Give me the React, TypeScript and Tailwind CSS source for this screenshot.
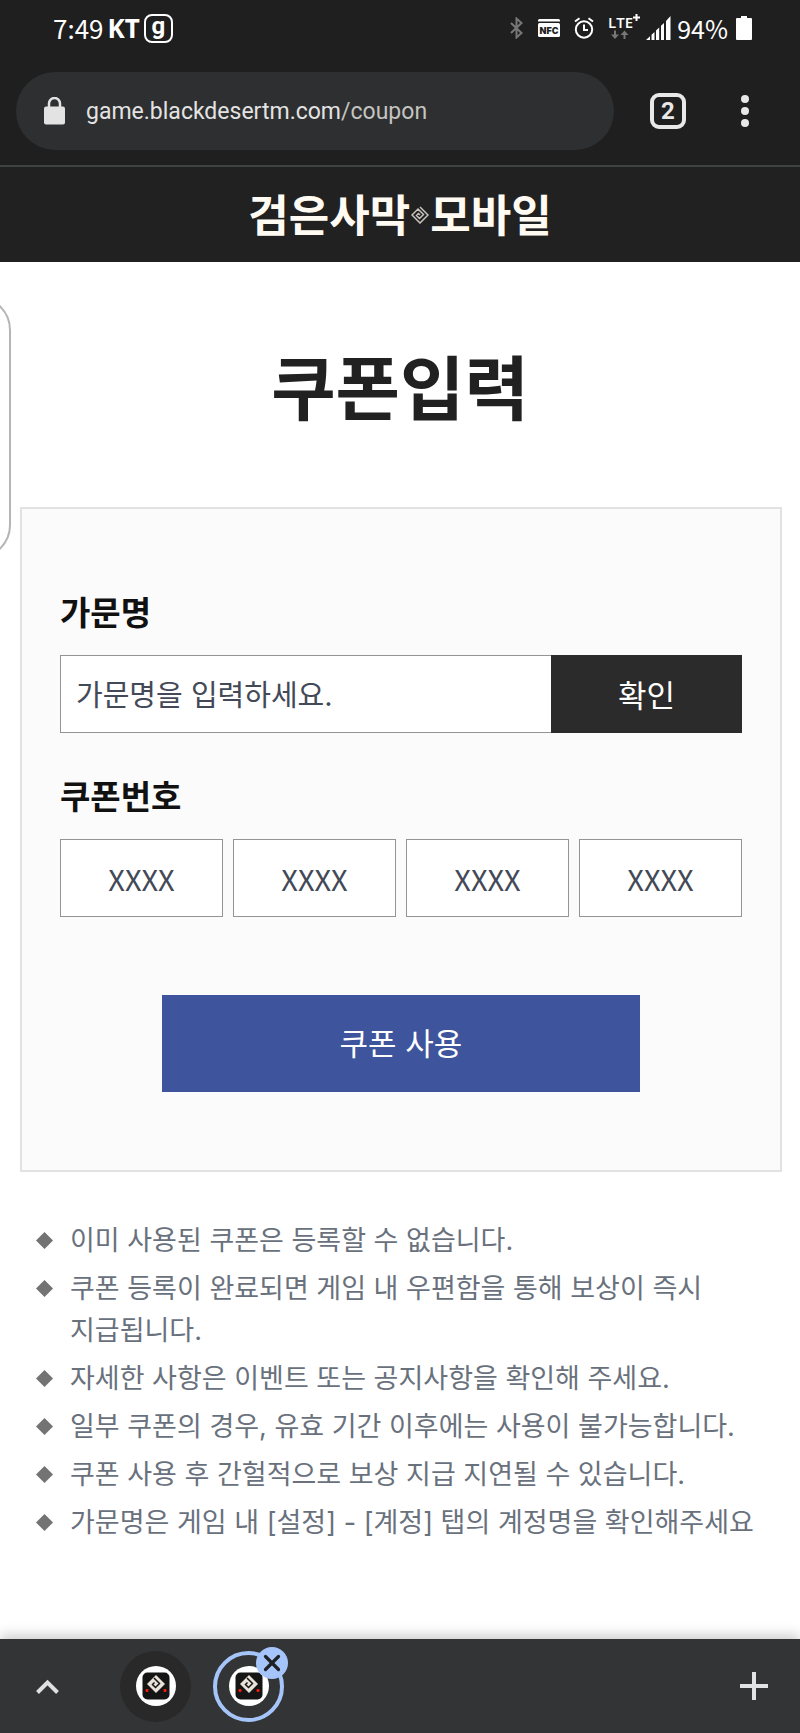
import { X } from "lucide-react";

const CODE_FIELDS = [1, 2, 3, 4];

const NOTICES = [
  "이미 사용된 쿠폰은 등록할 수 없습니다.",
  "쿠폰 등록이 완료되면 게임 내 우편함을 통해 보상이 즉시 지급됩니다.",
  "자세한 사항은 이벤트 또는 공지사항을 확인해 주세요.",
  "일부 쿠폰의 경우, 유효 기간 이후에는 사용이 불가능합니다.",
  "쿠폰 사용 후 간헐적으로 보상 지급 지연될 수 있습니다.",
  "가문명은 게임 내 [설정] - [계정] 탭의 계정명을 확인해주세요",
];

function StatusBar() {
  return (
    <div className="flex h-14 items-center justify-between pr-12 pl-[53px] text-white">
      <div className="flex items-center gap-1 text-[26px] leading-8">
        <span>7:49</span>
        <span className="font-['Noto_Sans'] font-bold">KT</span>
        <span className="flex h-[29px] w-[29px] items-center justify-center rounded-lg border-2 border-white pb-1 font-['Roboto'] text-2xl leading-6 font-bold">
          g
        </span>
      </div>
      <div className="flex items-center">
        <svg className="mr-[15px]" width="13" height="22" viewBox="0 0 13 22" fill="none" stroke="#777" strokeWidth="2">
          <path d="M1 6l10.500 10L6.500 20.500V1.500L11.500 6L1 16" />
        </svg>
        <svg className="mr-3.5" width="22" height="18" viewBox="0 0 22 18">
          <path d="M1.500 0h19a1.500 1.500 0 0 1 1.500 1.500V2.500H0V1.500A1.500 1.500 0 0 1 1.500 0z" fill="#fff" />
          <rect y="4" width="22" height="14" rx="1.500" fill="#fff" />
          <text x="11" y="14.500" textAnchor="middle" fontFamily="Inter, sans-serif" fontSize="9" fontWeight="900" fill="#1f1f1f">
            NFC
          </text>
        </svg>
        <svg className="mr-3.5" width="20" height="22" viewBox="0 0 20 22" fill="none" stroke="#fff" strokeWidth="2">
          <circle cx="10" cy="12.500" r="8.200" />
          <path d="M10 7.500V13h4M1 4.500L5.500 1.300M19 4.500L14.500 1.300" />
        </svg>
        <svg className="mr-1.5 overflow-visible" width="32" height="36" viewBox="0 0 32 36">
          <text x="0" y="18" fontFamily="Open Sans, sans-serif" fontSize="15" fontWeight="600" fill="#fff">
            LTE
          </text>
          <path d="M25 7.500h7M28.500 4v7" stroke="#fff" strokeWidth="2" />
          <path d="M6 20.500h2v4h3l-4 4.500l-4-4.500h3zM15.500 29h2v-4h3l-4-4.500l-4 4.500h3z" fill="#777" />
        </svg>
        <svg className="mr-1.5" width="25" height="24" viewBox="0 0 25 24" fill="#fff">
          <path d="M0 24l4-3.800V24zM5.500 24v-5.200l3-2.900V24zM10 24v-9.500l3.200-3V24zM15 24V9.800l3-2.900V24zM20 24V5l4.500-5V24z" />
        </svg>
        <span className="mr-2 text-[25px] leading-8">94%</span>
        <svg width="16" height="24" viewBox="0 0 16 24" fill="#fff">
          <path d="M5 0h6v2h4a1 1 0 0 1 1 1v20a1 1 0 0 1-1 1H1a1 1 0 0 1-1-1V3a1 1 0 0 1 1-1h4z" />
        </svg>
      </div>
    </div>
  );
}

function AddressBar() {
  return (
    <div className="flex items-center border-b-2 border-[#3f4243] pt-4 pr-[46px] pb-[15px] pl-4">
      <div className="flex h-[78px] flex-1 items-center rounded-full bg-[#2e2f31] pl-7">
        <svg width="21" height="28" viewBox="0 0 21 28">
          <path d="M5 11V6.500a5.500 5.500 0 0 1 11 0V11" fill="none" stroke="#e3e3e3" strokeWidth="2.500" />
          <rect y="9.500" width="21" height="18" rx="2" fill="#e3e3e3" />
        </svg>
        <a
          href="https://game.blackdesertm.com/coupon"
          className="ml-[21px] pt-0.5 font-['Roboto',sans-serif] text-[23px] text-[#e3e3e3]"
        >
          game.blackdesertm.com<span className="text-[#c4c4c0]">/coupon</span>
        </a>
      </div>
      <button
        type="button"
        aria-label="탭 전환"
        className="ml-9 flex h-9 w-9 items-center justify-center rounded-[9px] border-4 border-[#e8e8e8] font-['Roboto'] text-2xl leading-6 font-bold text-[#e8e8e8]"
      >
        2
      </button>
      <button type="button" aria-label="메뉴" className="ml-[50px] flex w-[18px] flex-col items-center gap-1">
        <span className="h-2 w-2 rounded-full bg-[#e8e8e8]" />
        <span className="h-2 w-2 rounded-full bg-[#e8e8e8]" />
        <span className="h-2 w-2 rounded-full bg-[#e8e8e8]" />
      </button>
    </div>
  );
}

function SiteHeader() {
  return (
    <div className="flex h-[95px] items-center justify-center gap-px bg-[#212121] pb-1 text-[44px] leading-none font-bold text-[#fffaf2]">
      <span>검은사막</span>
      <svg className="mt-1" width="18" height="18" viewBox="0 0 18 18" fill="none" stroke="#c9c5be" strokeWidth="1.500">
        <path d="M9 1l8 8l-8 8l-8-8l6-6l5.500 5.500l-4 4l-3-3l2-2l1.500 1.500" />
      </svg>
      <span>모바일</span>
    </div>
  );
}

function CouponForm() {
  return (
    <form className="mr-[18px] ml-5 flex flex-col border-2 border-[#e2e2e2] bg-[#fbfbfb] px-[38px] py-[78px]">
      <label htmlFor="family" className="text-[33px] leading-[48px] font-bold text-[#111]">
        가문명
      </label>
      <div className="mt-5 flex h-[78px]">
        <input
          id="family"
          type="text"
          placeholder="가문명을 입력하세요."
          className="min-w-0 flex-1 border border-r-0 border-[#949494] bg-white pt-1 pl-[15px] font-['Inter','Noto_Sans_CJK_KR',sans-serif] text-[29px] text-[#434956] placeholder:text-[#434956]"
        />
        <button type="button" className="w-[191px] bg-[#2b2b2b] text-[31px] text-white">
          확인
        </button>
      </div>

      <label htmlFor="code-1" className="mt-[38px] text-[33px] leading-[48px] font-bold text-[#111]">
        쿠폰번호
      </label>
      <div className="mt-5 grid grid-cols-4 gap-2.5">
        {CODE_FIELDS.map((n) => (
          <input
            key={n}
            id={`code-${n}`}
            type="text"
            maxLength={4}
            aria-label={`쿠폰번호 ${n}`}
            placeholder="XXXX"
            className="h-[78px] w-full min-w-0 border border-[#949494] bg-white text-center text-[29px] text-[#434956] placeholder:text-[#434956]"
          />
        ))}
      </div>

      <button
        type="submit"
        className="mt-[78px] h-[97px] w-[70%] self-center bg-[#3e549c] pt-0.5 font-['Inter','Noto_Sans_CJK_KR',sans-serif] text-[31px] text-white"
      >
        쿠폰 사용
      </button>
    </form>
  );
}

function NoticeList() {
  return (
    <ul className="mt-12 mb-20 flex flex-col gap-1.5 pr-9 pl-9 font-['Inter','Noto_Sans_CJK_KR',sans-serif] text-[27px] leading-[42px] break-keep text-[#69717d]">
      {NOTICES.map((notice) => (
        <li key={notice} className="flex">
          <svg className="mt-3 mr-[17px] shrink-0" width="17" height="17" viewBox="0 0 17 17" fill="#737373">
            <path d="M8.500 0L17 8.500L8.500 17L0 8.500z" />
          </svg>
          <span>{notice}</span>
        </li>
      ))}
    </ul>
  );
}

function SiteIcon() {
  return (
    <svg width="40" height="40" viewBox="0 0 40 40">
      <circle cx="20" cy="20" r="20" fill="#fff" />
      <rect x="6.500" y="6.500" width="27" height="27" rx="5" fill="#151515" />
      <path d="M20 9l9 9l-9 9l-9-9z" fill="#e8e2d8" />
      <path d="M18 12l5.500 5.500l-4 4l-3-3l2-2" fill="none" stroke="#151515" strokeWidth="1.500" />
      <rect x="9.500" y="23" width="3" height="3" rx="1" fill="#f21c0a" />
      <rect x="27.500" y="23" width="3" height="3" rx="1" fill="#f21c0a" />
    </svg>
  );
}

function TabStrip() {
  return (
    <nav className="mt-auto flex h-[94px] items-center bg-[#333435] pr-8 pl-9 shadow-[0_-4px_12px_rgba(0,0,0,0.2)]">
      <button type="button" aria-label="탭 목록 열기">
        <svg width="23" height="15" viewBox="0 0 23 15" fill="none" stroke="#e0e0e0" strokeWidth="4">
          <path d="M1.500 13.500L11.500 3.500l10 10" />
        </svg>
      </button>
      <button
        type="button"
        aria-label="첫 번째 탭"
        className="ml-[61px] flex h-[71px] w-[71px] items-center justify-center rounded-full bg-[#292929]"
      >
        <SiteIcon />
      </button>
      <div className="relative ml-[22px]">
        <button
          type="button"
          aria-label="두 번째 탭"
          className="flex h-[71px] w-[71px] items-center justify-center rounded-full border-4 border-[#a5c5fa]"
        >
          <SiteIcon />
        </button>
        <button
          type="button"
          aria-label="탭 닫기"
          className="absolute -top-1 -right-1 flex h-8 w-8 items-center justify-center rounded-full bg-[#a5c5fa] text-[#202124]"
        >
          <X size={26} strokeWidth={3} />
        </button>
      </div>
      <button type="button" aria-label="새 탭" className="ml-auto">
        <svg width="28" height="28" viewBox="0 0 28 28" stroke="#e3e3e3" strokeWidth="4">
          <path d="M0 14h28M14 0v28" />
        </svg>
      </button>
    </nav>
  );
}

export default function App() {
  return (
    <div className="relative flex min-h-screen flex-col overflow-hidden bg-white font-['Noto_Sans_CJK_KR',sans-serif]">
      <header className="bg-[#1f1f1f]">
        <StatusBar />
        <AddressBar />
        <SiteHeader />
      </header>

      <main>
        <h1 className="pt-[73px] pb-[72px] text-center text-[70px] leading-[100px] font-bold text-[#212121]">쿠폰입력</h1>
        <CouponForm />
        <NoticeList />
      </main>

      <TabStrip />

      {/* edge panel handle */}
      <div className="absolute top-[296px] -left-[89px] h-[263px] w-[100px] rounded-[34px] border-2 border-[#b5b5b5]" />
    </div>
  );
}
